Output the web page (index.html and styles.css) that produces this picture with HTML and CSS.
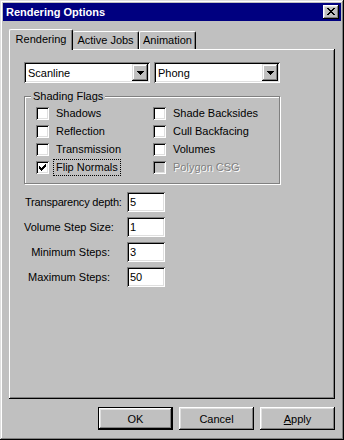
FILE: index.html
```html
<!DOCTYPE html>
<html lang="en">
<head>
  <meta charset="UTF-8">
  <meta name="viewport" content="width=device-width, initial-scale=1.0">
  <title>Rendering Options</title>
  <link rel="stylesheet" href="styles.css">
</head>
<body>
  <div class="window">
    <div class="titlebar">
      <span class="title">Rendering Options</span>
      <div class="close">
        <svg width="8" height="7" viewBox="0 0 8 7" shape-rendering="crispEdges"><path d="M0 0h2v1H0zM6 0h2v1H6zM1 1h2v1H1zM5 1h2v1H5zM2 2h4v1H2zM3 3h2v1H3zM2 4h4v1H2zM1 5h2v1H1zM5 5h2v1H5zM0 6h2v1H0zM6 6h2v1H6z" fill="#000"/></svg>
      </div>
    </div>

    <div class="content">
      <div class="tabs">
        <div class="tab active">Rendering</div>
        <div class="tab jobs">Active Jobs</div>
        <div class="tab anim">Animation</div>
      </div>

      <div class="panel">
        <div class="combos">
          <div class="combo">
            <span class="combo-text">Scanline</span>
            <span class="combo-btn"><svg width="7" height="4" viewBox="0 0 7 4" shape-rendering="crispEdges"><path d="M0 0h7v1H0zM1 1h5v1H1zM2 2h3v1H2zM3 3h1v1H3z" fill="#000"/></svg></span>
          </div>
          <div class="combo">
            <span class="combo-text">Phong</span>
            <span class="combo-btn"><svg width="7" height="4" viewBox="0 0 7 4" shape-rendering="crispEdges"><path d="M0 0h7v1H0zM1 1h5v1H1zM2 2h3v1H2zM3 3h1v1H3z" fill="#000"/></svg></span>
          </div>
        </div>

        <fieldset class="group">
          <legend>Shading Flags</legend>
          <div class="checks">
            <div class="check"><span class="box"></span><span class="label">Shadows</span></div>
            <div class="check"><span class="box"></span><span class="label">Shade Backsides</span></div>
            <div class="check"><span class="box"></span><span class="label">Reflection</span></div>
            <div class="check"><span class="box"></span><span class="label">Cull Backfacing</span></div>
            <div class="check"><span class="box"></span><span class="label">Transmission</span></div>
            <div class="check"><span class="box"></span><span class="label">Volumes</span></div>
            <div class="check">
              <span class="box"><svg width="7" height="7" viewBox="0 0 7 7" shape-rendering="crispEdges"><path d="M6 0h1v1H6zM5 1h2v1H5zM0 2h1v1H0zM4 2h3v1H4zM0 3h2v1H0zM3 3h3v1H3zM0 4h5v1H0zM1 5h3v1H1zM2 6h1v1H2z" fill="#000"/></svg></span>
              <span class="label focus">Flip Normals</span>
            </div>
            <div class="check disabled"><span class="box"></span><span class="label">Polygon CSG</span></div>
          </div>
        </fieldset>

        <div class="fields">
          <span class="flabel first">Transparency depth:</span><span class="input">5</span>
          <span class="flabel">Volume Step Size:</span><span class="input">1</span>
          <span class="flabel">Minimum Steps:</span><span class="input">3</span>
          <span class="flabel">Maximum Steps:</span><span class="input">50</span>
        </div>
      </div>

      <div class="buttons">
        <div class="btn default">OK</div>
        <div class="btn">Cancel</div>
        <div class="btn"><u>A</u>pply</div>
      </div>
    </div>
  </div>
</body>
</html>
```

FILE: styles.css
```css
*{margin: 0; padding: 0; box-sizing: border-box;}
body{
  width: 344px;
  height: 440px;
  background: #c0c0c0;
  font-family: "Liberation Sans", Arial, sans-serif;
  font-size: 11px;
  color: #000;
}
.window{
  width: 344px;
  height: 440px;
  padding: 3px;
  background: #c0c0c0;
  box-shadow: inset -1px -1px #000, inset 1px 1px #dfdfdf, inset -2px -2px #808080, inset 2px 2px #fff;
}
.titlebar{
  height: 18px;
  background: #000080;
  display: flex;
  align-items: center;
  justify-content: space-between;
  padding: 0 2px 0 3px;
}
.title{
  color: #fff;
  font-weight: bold;
  font-size: 11px;
}
.close{
  width: 16px;
  height: 14px;
  background: #c0c0c0;
  display: flex;
  align-items: center;
  justify-content: center;
  box-shadow: inset -1px -1px #000, inset 1px 1px #fff, inset -2px -2px #808080, inset 2px 2px #dfdfdf;
}
.close svg{display: block; margin-top: -1px;}

.content{
  padding: 8px 6px 0 6px;
}

/* tabs */
.tabs{
  display: flex;
  align-items: flex-end;
  height: 20px;
}
.tab{
  height: 18px;
  background: #c0c0c0;
  display: flex;
  align-items: center;
  justify-content: center;
  border-top: 1px solid #fff;
  border-left: 1px solid #fff;
  border-right: 1px solid #000;
  border-radius: 2px 2px 0 0;
  box-shadow: inset -1px 0 #808080;
  padding-bottom: 1px;
}
.tab.active{
  width: 64px;
  height: 21px;
  margin-bottom: -1px;
  position: relative;
  z-index: 1;
  padding-bottom: 2px;
}
.tab.jobs{width: 66px; border-left: none;}
.tab.anim{width: 57px;}

.panel{
  height: 350px;
  padding: 13px 0 0 15px;
  box-shadow: inset -1px -1px #000, inset 1px 1px #fff, inset -2px -2px #808080;
}

/* combos */
.combos{
  display: flex;
  gap: 4px;
}
.combo{
  width: 126px;
  height: 21px;
  background: #fff;
  display: flex;
  align-items: center;
  justify-content: space-between;
  padding: 2px;
  box-shadow: inset 1px 1px #808080, inset -1px -1px #fff, inset 2px 2px #000, inset -2px -2px #dfdfdf;
}
.combo-text{padding-left: 2px;}
.combo-btn{
  width: 16px;
  height: 17px;
  background: #c0c0c0;
  display: flex;
  align-items: center;
  justify-content: center;
  box-shadow: inset -1px -1px #000, inset 1px 1px #dfdfdf, inset -2px -2px #808080, inset 2px 2px #fff;
}
.combo-btn svg{display: block;}

/* group box */
.group{
  width: 256px;
  margin-top: 7px;
  border: 1px solid #808080;
  box-shadow: inset 1px 1px #fff, 1px 1px #fff;
  padding: 0;
}
.group legend{
  margin-left: 6px;
  padding: 0 2px;
  background: #c0c0c0;
  line-height: 13px;
}
.checks{
  display: grid;
  grid-template-columns: 117px 1fr;
  grid-auto-rows: 18px;
  padding: 1px 0 7px 11px;
}
.check{
  display: flex;
  align-items: center;
  gap: 6px;
}
.box{
  width: 13px;
  height: 13px;
  background: #fff;
  flex: none;
  display: flex;
  align-items: center;
  justify-content: center;
  box-shadow: inset 1px 1px #808080, inset -1px -1px #fff, inset 2px 2px #000, inset -2px -2px #dfdfdf;
}
.box svg{display: block;}
.label{line-height: 13px; padding: 0 1px;}
.label.focus{outline: 1px dotted #000; outline-offset: 1px;}
.check.disabled .box{background: #c0c0c0;}
.check.disabled .label{color: #808080; text-shadow: 1px 1px #fff;}

/* numeric fields */
.fields{
  display: grid;
  grid-template-columns: 103px 38px;
  grid-auto-rows: 20px;
  row-gap: 5px;
  margin-top: 8px;
  align-items: center;
}
.flabel{
  text-align: right;
  padding-right: 17px;
  white-space: nowrap;
}
.flabel.first{
  text-align: left;
  padding: 0 0 0 1px;
  letter-spacing: -0.2px;
}
.input{
  height: 20px;
  background: #fff;
  padding: 0 3px;
  display: flex;
  align-items: center;
  box-shadow: inset 1px 1px #808080, inset -1px -1px #fff, inset 2px 2px #000, inset -2px -2px #dfdfdf;
}

/* buttons */
.buttons{
  display: flex;
  justify-content: flex-end;
  gap: 6px;
  margin-top: 8px;
}
.btn{
  width: 75px;
  height: 23px;
  display: flex;
  align-items: center;
  justify-content: center;
  box-shadow: inset -1px -1px #000, inset 1px 1px #fff, inset -2px -2px #808080, inset 2px 2px #dfdfdf;
}
.btn.default{
  border: 1px solid #000;
}
.btn u{text-decoration: underline;}
```
